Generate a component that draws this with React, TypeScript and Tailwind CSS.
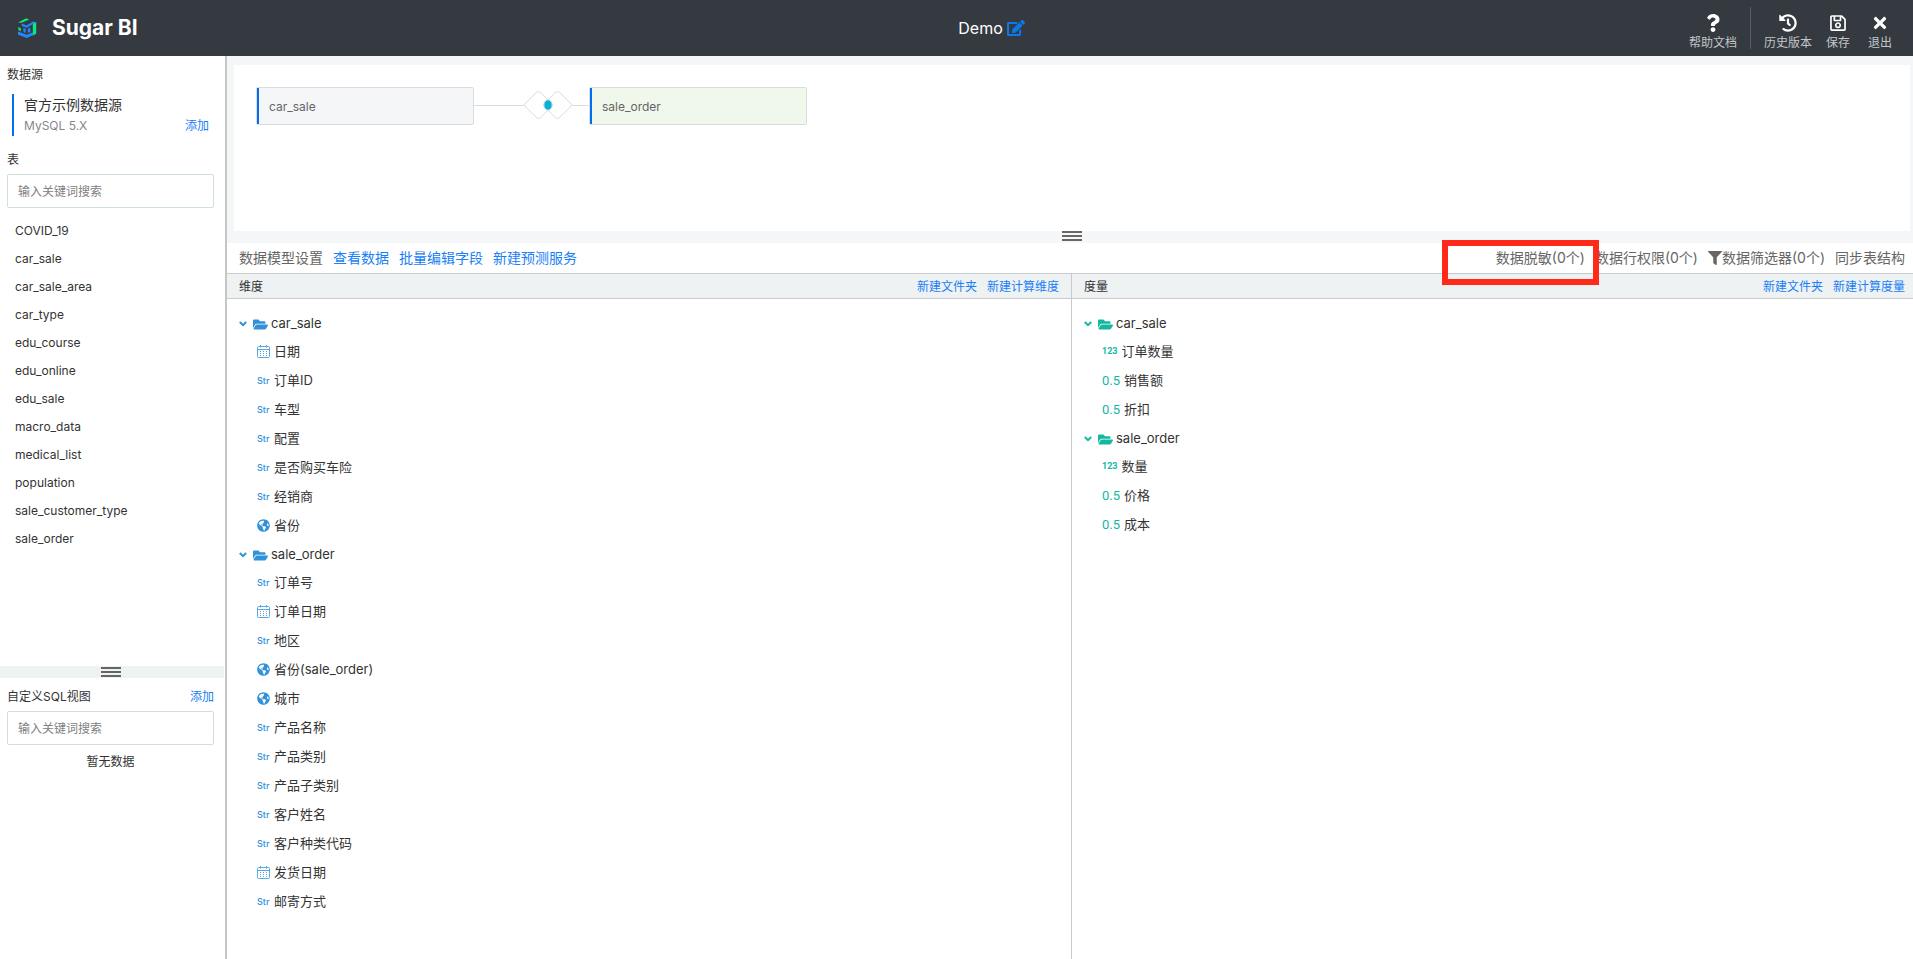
import type { ReactNode } from "react";
import {
  FaEdit,
  FaFilter,
  FaFolderOpen,
  FaGlobeAmericas,
  FaHistory,
  FaQuestion,
  FaRegSave,
  FaTimes,
} from "react-icons/fa";

type FieldType = "date" | "str" | "geo" | "int" | "float";

interface Field {
  type: FieldType;
  name: string;
}

interface Folder {
  name: string;
  fields: Field[];
}

const tables = [
  "COVID_19",
  "car_sale",
  "car_sale_area",
  "car_type",
  "edu_course",
  "edu_online",
  "edu_sale",
  "macro_data",
  "medical_list",
  "population",
  "sale_customer_type",
  "sale_order",
];

const dimensions: Folder[] = [
  {
    name: "car_sale",
    fields: [
      { type: "date", name: "日期" },
      { type: "str", name: "订单ID" },
      { type: "str", name: "车型" },
      { type: "str", name: "配置" },
      { type: "str", name: "是否购买车险" },
      { type: "str", name: "经销商" },
      { type: "geo", name: "省份" },
    ],
  },
  {
    name: "sale_order",
    fields: [
      { type: "str", name: "订单号" },
      { type: "date", name: "订单日期" },
      { type: "str", name: "地区" },
      { type: "geo", name: "省份(sale_order)" },
      { type: "geo", name: "城市" },
      { type: "str", name: "产品名称" },
      { type: "str", name: "产品类别" },
      { type: "str", name: "产品子类别" },
      { type: "str", name: "客户姓名" },
      { type: "str", name: "客户种类代码" },
      { type: "date", name: "发货日期" },
      { type: "str", name: "邮寄方式" },
    ],
  },
];

const measures: Folder[] = [
  {
    name: "car_sale",
    fields: [
      { type: "int", name: "订单数量" },
      { type: "float", name: "销售额" },
      { type: "float", name: "折扣" },
    ],
  },
  {
    name: "sale_order",
    fields: [
      { type: "int", name: "数量" },
      { type: "float", name: "价格" },
      { type: "float", name: "成本" },
    ],
  },
];

function Logo() {
  return (
    <svg className="h-5 w-5" viewBox="0 0 20 20" fill="none">
      <path d="M1 4.4 8.2.8q1.6-.6 3.2.2l.8.6-7.6 3.2z" fill="#0be881" />
      <path d="M15.8 5.4 19.2 4v11.6l-1.2 1-3.4 1.2 1.2-2z" fill="#0be881" />
      <path d="M1.4 9 3.8 10.2v3L1.4 12z" fill="#0be881" />
      <path d="M4.8 5.6 9.6 7.4 16 3.6l3 .6-9.2 5.6L4.8 8z" fill="#2288ff" />
      <path d="M6.4 9.8l2.2.9v4.2l-2.2-1.1zM10.8 10.9l2.6-1.3v4.2l-2.6 1.2z" fill="#2288ff" />
      <path d="M1 13.6l8.8 3.2 6-2.6v3l-6 2.8L1 16.8z" fill="#2288ff" />
    </svg>
  );
}

function CalendarIcon() {
  return (
    <svg className="h-[13px] w-[13px]" viewBox="0 0 13 13" fill="none" stroke="#5ba7e0">
      <rect x="0.5" y="1.5" width="12" height="11" rx="1" />
      <path d="M0.5 4.5h12M3.5 0v2.5M9.5 0v2.5" />
      <path d="M3 6.5h7M3 8.5h7M3 10.5h7" strokeDasharray="1 2" />
    </svg>
  );
}

function ChevronIcon({ color }: { color: string }) {
  return (
    <svg className={`h-2 w-2 ${color}`} viewBox="0 0 8 8" fill="none" stroke="currentColor" strokeWidth="2">
      <path d="M0.8 2 4 5.2 7.2 2" />
    </svg>
  );
}

function FieldIcon({ type }: { type: FieldType }) {
  if (type === "date") return <CalendarIcon />;
  if (type === "geo") return <FaGlobeAmericas className="h-[13px] w-[13px] text-[#3191d9]" />;
  if (type === "str") return <span className="w-[13px] text-[9px] font-medium text-[#3191d9]">Str</span>;
  if (type === "int") {
    return <span className="font-['Roboto',sans-serif] text-[9px] font-bold text-[#14b8a0]">123</span>;
  }
  return <span className="font-['Roboto',sans-serif] text-[13px] text-[#14b8a0]">0.5</span>;
}

function FieldTree({ folders, color }: { folders: Folder[]; color: string }) {
  return (
    <ul className="px-3 pt-[10px] text-[13px] text-[#333]">
      {folders.map((folder) => (
        <li key={folder.name}>
          <button className="flex h-7 items-center pt-[2px]">
            <ChevronIcon color={color} />
            <FaFolderOpen className={`ml-[6px] h-[15px] w-[15px] ${color}`} />
            <span className="ml-[3px]">{folder.name}</span>
          </button>
          <ul>
            {folder.fields.map((field) => (
              <li key={field.name} className="flex h-[29px] items-center gap-1 pl-[18px]">
                <FieldIcon type={field.type} />
                <span>{field.name}</span>
              </li>
            ))}
          </ul>
        </li>
      ))}
    </ul>
  );
}

function HeaderButton({ icon, label }: { icon: ReactNode; label: string }) {
  return (
    <button className="flex flex-col items-center gap-[2px] pt-2 text-xs text-[#c3c6c9]">
      <span className="flex h-5 items-center text-white">{icon}</span>
      {label}
    </button>
  );
}

function Grip() {
  return (
    <span className="flex w-5 flex-col gap-[2px]">
      <span className="h-[2px] bg-[#666]" />
      <span className="h-[2px] bg-[#666]" />
      <span className="h-[2px] bg-[#666]" />
    </span>
  );
}

function SearchInput({ label }: { label: string }) {
  return (
    <input
      type="text"
      aria-label={label}
      placeholder="输入关键词搜索"
      className="h-[34px] w-full rounded-xs border border-[#cfdfdc] px-[10px] text-xs placeholder:text-[#808080]"
    />
  );
}

function TableNode({ name, bg }: { name: string; bg: string }) {
  return (
    <div className={`flex h-[38px] w-[218px] items-stretch rounded-xs border border-[#dcdcde] ${bg}`}>
      <span className="w-[2px] bg-[#0070f0]" />
      <span className="self-center pt-[2px] pl-[10px] text-xs text-[#666]">{name}</span>
    </div>
  );
}

function JoinIcon() {
  return (
    <svg className="h-7 w-12" viewBox="0 0 48 28" fill="none" stroke="#dcdcde">
      <path d="M1 12.8 12.6 1.3q1.9-1.4 3.8 0L28 12.8q1 1.2 0 2.4L16.4 26.7q-1.9 1.4-3.8 0L1 15.2q-1-1.2 0-2.4z" />
      <path d="M20 12.8 31.6 1.3q1.9-1.4 3.8 0L47 12.8q1 1.2 0 2.4L35.4 26.7q-1.9 1.4-3.8 0L20 15.2q-1-1.2 0-2.4z" />
      <ellipse cx="24" cy="14" rx="4" ry="5" fill="#00b4d8" stroke="#b4cfdc" />
    </svg>
  );
}

interface PanelHeaderProps {
  title: string;
  actions: string[];
  className: string;
}

function PanelHeader({ title, actions, className }: PanelHeaderProps) {
  return (
    <div
      className={`flex h-[26px] items-center gap-[10px] border-y border-[#c8cbcd] bg-[#eef2f3] pt-[2px] pl-3 text-xs text-[#333] ${className}`}
    >
      <h2 className="mr-auto">{title}</h2>
      {actions.map((action) => (
        <button key={action} className="text-[#1a80f5]">
          {action}
        </button>
      ))}
    </div>
  );
}

function Sidebar() {
  return (
    <aside className="flex w-[227px] shrink-0 flex-col border-r-2 border-[#c4c6c8] text-xs text-[#333]">
      <div className="flex-1 pt-[11px]">
        <h2 className="px-[7px]">数据源</h2>
        <div className="mt-[11px] mr-4 ml-3 border-l-2 border-[#0070f0] pl-[10px]">
          <p className="text-sm leading-[22px]">官方示例数据源</p>
          <div className="flex justify-between leading-5">
            <span className="text-[#85878c]">MySQL 5.X</span>
            <button className="text-[#1a80f5]">添加</button>
          </div>
        </div>
        <div className="px-[7px] pr-[11px]">
          <h2 className="mt-4 mb-[6px]">表</h2>
          <SearchInput label="搜索表" />
        </div>
        <ul className="pt-[9px] pl-[15px] leading-7">
          {tables.map((table) => (
            <li key={table}>{table}</li>
          ))}
        </ul>
      </div>
      <div className="mr-px flex h-3 items-center justify-center bg-[#eef2f3] pr-[3px]">
        <Grip />
      </div>
      <div className="h-[281px] pt-[11px] pr-[11px] pl-[7px]">
        <div className="mb-[6px] flex justify-between">
          <h2>自定义SQL视图</h2>
          <button className="text-[#1a80f5]">添加</button>
        </div>
        <SearchInput label="搜索自定义SQL视图" />
        <p className="mt-[9px] text-center">暂无数据</p>
      </div>
    </aside>
  );
}

export default function App() {
  return (
    <div className="flex min-h-screen flex-col bg-white font-['Inter','Noto_Sans_CJK_SC',sans-serif]">
      <header className="grid h-14 grid-cols-3 items-center bg-[#343a40]">
        <div className="flex items-center gap-[15px] pl-[17px]">
          <Logo />
          <h1 className="text-[21px] font-bold text-white">Sugar BI</h1>
        </div>
        <button className="flex items-center justify-center gap-1 pl-[70px] text-base text-white">
          Demo
          <FaEdit className="text-lg text-[#0a78f0]" />
        </button>
        <div className="flex items-center justify-end gap-[14px] pr-[21px]">
          <HeaderButton icon={<FaQuestion className="h-[18px] w-[18px]" />} label="帮助文档" />
          <span className="-mx-px h-[42px] w-px bg-[#5a6066]" />
          <HeaderButton icon={<FaHistory className="h-[18px] w-[18px]" />} label="历史版本" />
          <div className="flex gap-[18px]">
            <HeaderButton icon={<FaRegSave className="h-[18px] w-[18px]" />} label="保存" />
            <HeaderButton icon={<FaTimes className="h-[18px] w-[18px]" />} label="退出" />
          </div>
        </div>
      </header>

      <div className="flex flex-1">
        <Sidebar />

        <main className="flex min-w-0 flex-1 flex-col">
          <section className="bg-[#f5f6f8] pt-[9px] pr-[3px] pl-[7px]">
            <div className="flex h-[166px] items-start rounded-xs bg-white pt-[22px] pl-[22px]">
              <TableNode name="car_sale" bg="bg-[#f5f6f8]" />
              <div className="flex h-9 items-center">
                <span className="h-px w-[50px] bg-[#dcdcde]" />
                <JoinIcon />
                <span className="h-px w-[17px] bg-[#dcdcde]" />
              </div>
              <TableNode name="sale_order" bg="bg-[#f0f8ec]" />
            </div>
            <div className="flex h-3 items-start justify-center">
              <Grip />
            </div>
          </section>

          <div className="flex h-[30px] items-center gap-[10px] pr-2 pl-3 text-sm text-[#666]">
            <span>数据模型设置</span>
            <button className="text-[#1a80f5]">查看数据</button>
            <button className="text-[#1a80f5]">批量编辑字段</button>
            <button className="mr-auto text-[#1a80f5]">新建预测服务</button>
            <button className="relative">
              数据脱敏(0个)
              <span className="absolute -top-2 -right-[14px] z-10 h-[45px] w-[157px] border-[6px] border-[#ff2a1a]" />
            </button>
            <button>数据行权限(0个)</button>
            <button className="flex items-center">
              <FaFilter className="h-[14px] w-[14px]" />
              数据筛选器(0个)
            </button>
            <button>同步表结构</button>
          </div>

          <div className="grid flex-1 grid-cols-[845fr_841fr]">
            <section className="border-r border-[#c8cbcd]">
              <PanelHeader title="维度" actions={["新建文件夹", "新建计算维度"]} className="pr-3" />
              <FieldTree folders={dimensions} color="text-[#3191d9]" />
            </section>
            <section>
              <PanelHeader title="度量" actions={["新建文件夹", "新建计算度量"]} className="pr-2" />
              <FieldTree folders={measures} color="text-[#14b8a0]" />
            </section>
          </div>
        </main>
      </div>
    </div>
  );
}
